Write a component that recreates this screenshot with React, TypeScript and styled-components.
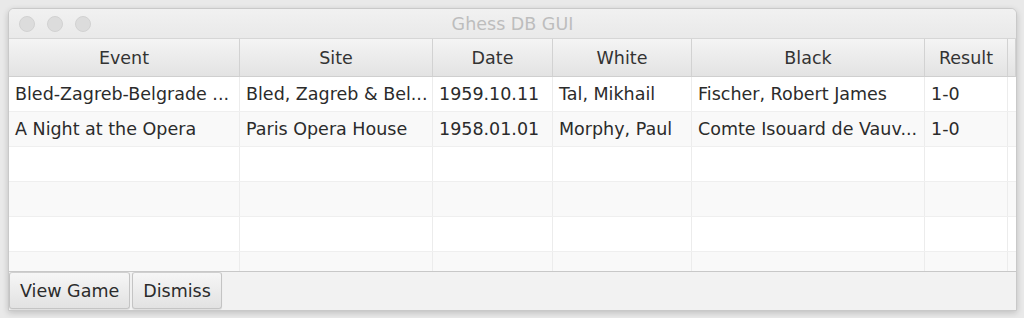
import React from 'react';
import styled, { createGlobalStyle } from 'styled-components';

const font = '"DejaVu Sans", "Liberation Sans", Arial, sans-serif';

const GlobalStyle = createGlobalStyle`
  html, body {
    margin: 0;
    padding: 0;
    background: #e9e9e9;
    font-family: ${font};
  }
`;

const Page = styled.div`
  width: 1024px;
  height: 318px;
  padding: 8px 7px 9px 8px;
  box-sizing: border-box;
`;

const Window = styled.div`
  height: 100%;
  display: flex;
  flex-direction: column;
  background: #f2f2f2;
  border: 1px solid #c9c9c9;
  border-radius: 6px 6px 0 0;
  box-shadow: 0 2px 6px rgba(0, 0, 0, 0.18);
  overflow: hidden;
`;

const TitleBar = styled.div`
  height: 30px;
  flex: none;
  display: flex;
  align-items: center;
  position: relative;
  background: linear-gradient(#f1f1f1, #e9e9e9);
  border-bottom: 1px solid #d6d6d6;
  box-sizing: border-box;
`;

const Lights = styled.div`
  display: flex;
  gap: 12px;
  padding-left: 10px;
`;

const Light = styled.span`
  width: 16px;
  height: 16px;
  border-radius: 50%;
  background: #dcdcdc;
  border: 1px solid #d2d2d2;
  box-sizing: border-box;
`;

const Title = styled.div`
  position: absolute;
  left: 0;
  right: 0;
  text-align: center;
  font-size: 17.5px;
  color: #bdbdbd;
  pointer-events: none;
`;

const Table = styled.div`
  flex: 1;
  display: flex;
  flex-direction: column;
  background: #fff;
  border-bottom: 1px solid #c8c8c8;
  overflow: hidden;
`;

const cols = '231px 193px 120px 139px 233px 83px 1fr';

const HeaderRow = styled.div`
  display: grid;
  grid-template-columns: ${cols};
  height: 38px;
  flex: none;
  background: linear-gradient(#f4f4f4, #e3e3e3);
  border-bottom: 1px solid #cfcfcf;
  box-sizing: border-box;
`;

const HeaderCell = styled.div`
  display: flex;
  align-items: center;
  justify-content: center;
  font-size: 17.5px;
  color: #333;
  border-right: 1px solid #d2d2d2;
`;

const Row = styled.div<{ $alt: boolean }>`
  display: grid;
  grid-template-columns: ${cols};
  height: 35px;
  flex: none;
  background: ${(p) => (p.$alt ? '#f9f9f9' : '#fff')};
  border-bottom: 1px solid #efefef;
  box-sizing: border-box;
`;

const Cell = styled.div`
  display: flex;
  align-items: center;
  padding: 0 6px;
  font-size: 17.5px;
  color: #2b2b2b;
  border-right: 1px solid #ececec;
  white-space: nowrap;
  overflow: hidden;
`;

const ButtonBar = styled.div`
  display: flex;
  height: 38px;
  flex: none;
  background: #f2f2f2;
`;

const Button = styled.button`
  height: 37px;
  padding: 0 10px;
  margin-right: 2px;
  font-family: ${font};
  font-size: 17.5px;
  color: #2b2b2b;
  background: linear-gradient(#f6f6f6, #e2e2e2);
  border: 1px solid #c4c4c4;
  border-top-color: #d0d0d0;
  border-radius: 3px;
  box-shadow: 0 1px 1px rgba(0, 0, 0, 0.08);
`;

const headers = ['Event', 'Site', 'Date', 'White', 'Black', 'Result', ''];

const games = [
  ['Bled-Zagreb-Belgrade ...', 'Bled, Zagreb & Bel...', '1959.10.11', 'Tal, Mikhail', 'Fischer, Robert James', '1-0', ''],
  ['A Night at the Opera', 'Paris Opera House', '1958.01.01', 'Morphy, Paul', 'Comte Isouard de Vauv...', '1-0', ''],
];

const App: React.FC = () => {
  const rows = [...games];
  while (rows.length < 6) rows.push(['', '', '', '', '', '', '']);

  return (
    <Page>
      <GlobalStyle />
      <Window>
        <TitleBar>
          <Lights>
            <Light />
            <Light />
            <Light />
          </Lights>
          <Title>Ghess DB GUI</Title>
        </TitleBar>
        <Table>
          <HeaderRow>
            {headers.map((h, i) => (
              <HeaderCell key={i}>{h}</HeaderCell>
            ))}
          </HeaderRow>
          {rows.map((row, i) => (
            <Row key={i} $alt={i % 2 === 1}>
              {row.map((c, j) => (
                <Cell key={j}>{c}</Cell>
              ))}
            </Row>
          ))}
        </Table>
        <ButtonBar>
          <Button>View Game</Button>
          <Button>Dismiss</Button>
        </ButtonBar>
      </Window>
    </Page>
  );
};

export default App;
